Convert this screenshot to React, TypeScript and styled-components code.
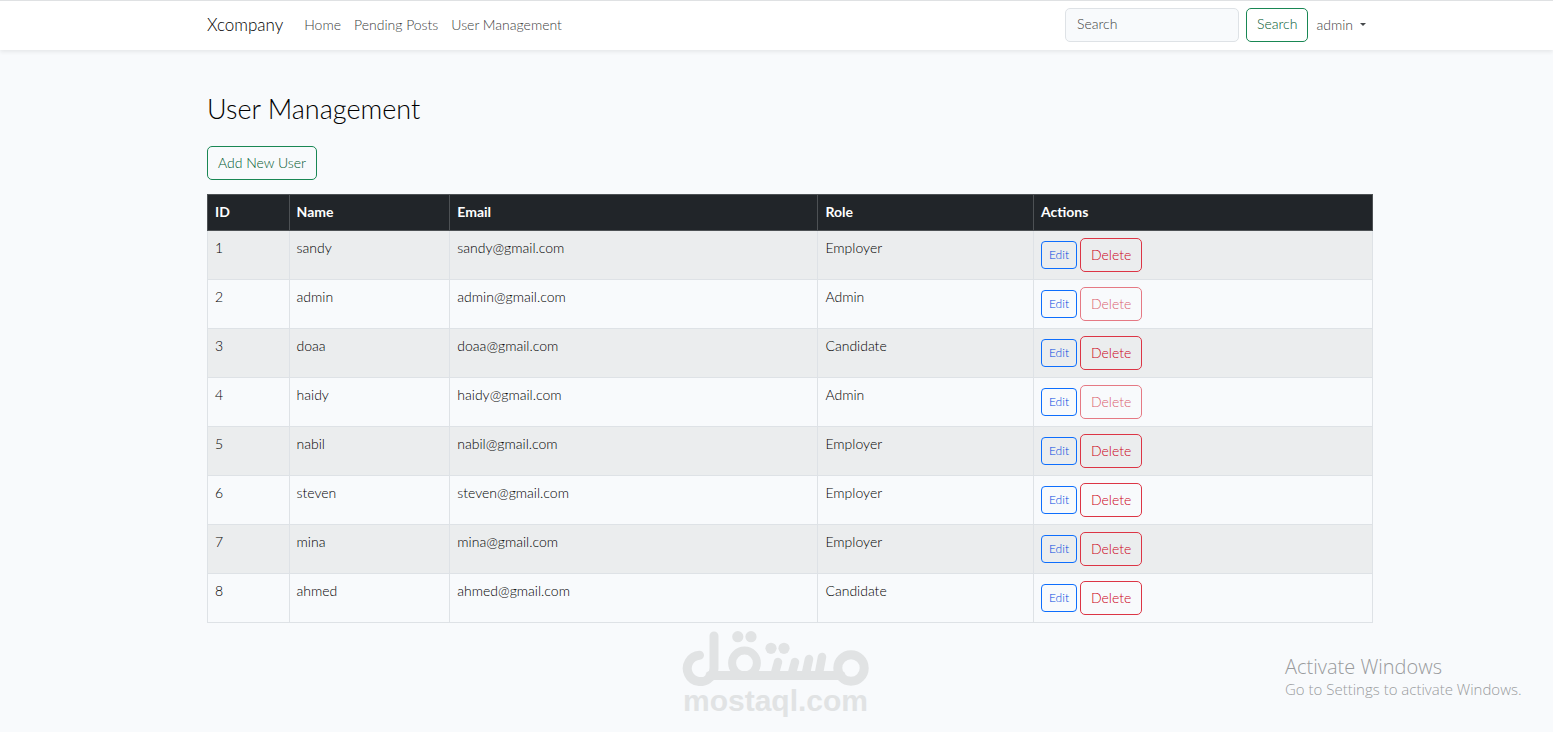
import React from "react";
import styled, { createGlobalStyle } from "styled-components";

const GlobalStyle = createGlobalStyle`
  *, *::before, *::after { box-sizing: border-box; }
  body {
    margin: 0;
    background: #f8fafc;
    color: #000;
    font-family: Lato, "Open Sans", sans-serif;
    font-size: 14px;
    font-weight: 300;
    line-height: 19px;
  }
  button, input { font: inherit; }
`;

const Page = styled.div`
  position: relative;
  min-height: 100vh;
  overflow: hidden;
`;

const Container = styled.div`
  max-width: 1193px;
  margin: 0 auto;
  padding-left: 27px;
`;

const Navbar = styled.header`
  background: #fff;
  border-top: 1px solid #dfe1e3;
  box-shadow: 0 2px 4px rgba(0, 0, 0, 0.075);
`;

const NavInner = styled(Container)`
  display: flex;
  align-items: center;
  justify-content: space-between;
  height: 49px;
  padding-bottom: 2px;
`;

const NavGroup = styled.nav`
  display: flex;
  align-items: center;
  gap: 13px;
`;

const Brand = styled.a`
  margin-right: 8px;
  color: #000;
  font-size: 17px;
  line-height: 24px;
  text-decoration: none;
`;

const NavLink = styled.a`
  color: #3c3e40;
  text-decoration: none;
`;

const SearchForm = styled.form`
  display: flex;
  align-items: center;
  gap: 7px;
`;

const SearchInput = styled.input`
  width: 174px;
  height: 34px;
  padding: 0 11px 2px;
  border: 1px solid #dee2e6;
  border-radius: 5px;
  background: #f8fafc;
  color: #212529;
  &::placeholder { color: #3c3e40; opacity: 1; }
`;

const tones = {
  success: { line: "#198754", text: "#00592f" },
  danger: { line: "#dc3545", text: "#cc0016" },
  primary: { line: "#0d6efd", text: "#0046e0" },
};

const Button = styled.button<{ $tone: keyof typeof tones; $small?: boolean }>`
  height: ${(p) => (p.$small ? 28 : 34)}px;
  padding: 0 ${(p) => (p.$small ? 7 : 10)}px 2px;
  border: 1px solid ${(p) => tones[p.$tone].line};
  border-radius: ${(p) => (p.$small ? 4 : 5)}px;
  background: transparent;
  color: ${(p) => tones[p.$tone].text};
  font-size: ${(p) => (p.$small ? 12 : 14)}px;
  &:disabled { opacity: 0.65; }
`;

const UserMenu = styled.button`
  display: flex;
  align-items: center;
  gap: 7px;
  margin-right: 7px;
  padding: 0;
  border: 0;
  background: none;
  color: #3c3e40;
  &::after {
    content: "";
    border: 3px solid transparent;
    border-top: 3px solid #45484b;
    border-bottom: 0;
  }
`;

const NavEnd = styled.div`
  display: flex;
  align-items: center;
  gap: 8px;
`;

const Main = styled.main`
  padding-top: 42px;
`;

const Title = styled.h1`
  margin: 0 0 20px;
  font-size: 27px;
  font-weight: 300;
  line-height: 34px;
`;

const Table = styled.table`
  width: 100%;
  margin-top: 14px;
  border-collapse: collapse;
  table-layout: fixed;
`;

const Th = styled.th<{ $share: number }>`
  width: ${(p) => p.$share}%;
  height: 36px;
  padding: 0 7px 2px;
  border: 1px solid #4d5154;
  background: #212529;
  color: #fff;
  font-weight: 700;
  text-align: left;
`;

const Row = styled.tr`
  &:nth-child(odd) { background: #ebedee; }
`;

const Td = styled.td`
  height: 49px;
  padding: 7px;
  border: 1px solid #dee2e6;
  vertical-align: top;
`;

const Actions = styled.div`
  display: flex;
  align-items: center;
  gap: 3px;
`;

const Mostaql = styled.div`
  position: absolute;
  bottom: 16px;
  left: 50%;
  width: 190px;
  margin-left: -96px;
  color: #e1e3e4;
  font: 700 30px/30px "Liberation Sans", sans-serif;
  text-align: center;
  pointer-events: none;
  svg { display: block; }
`;

const Activation = styled.div`
  position: absolute;
  right: 32px;
  bottom: 32px;
  width: 236px;
  color: #999b9c;
  font-family: "Open Sans", sans-serif;
  font-size: 15px;
  line-height: 22px;
  white-space: nowrap;
  pointer-events: none;
`;

const ActivationTitle = styled.div`
  font-size: 20px;
  line-height: 23px;
`;

const columns = [
  { label: "ID", share: 7 },
  { label: "Name", share: 13.8 },
  { label: "Email", share: 31.6 },
  { label: "Role", share: 18.5 },
  { label: "Actions", share: 29.1 },
];

const users = [
  ["sandy", "Employer"],
  ["admin", "Admin"],
  ["doaa", "Candidate"],
  ["haidy", "Admin"],
  ["nabil", "Employer"],
  ["steven", "Employer"],
  ["mina", "Employer"],
  ["ahmed", "Candidate"],
];

function MostaqlMark() {
  return (
    <svg width="190" height="58" viewBox="0 0 190 58" fill="none" stroke="currentColor" strokeWidth="9" strokeLinecap="round" aria-hidden="true">
      <path d="M18.500 27.200A13.200 13.200 0 1 0 29 49.500C32 47 33 44 33 40V8" />
      <path d="M29 47.500H160" />
      <circle cx="63.500" cy="35" r="12.400" strokeWidth="8" />
      <circle cx="170" cy="40" r="13.200" />
      <path d="M94 45l3-11M111 45l3-11M125 45l3-14M138 45l3-16" strokeWidth="8.500" />
      <g fill="currentColor" stroke="none">
        <circle cx="56.800" cy="8.700" r="5.600" />
        <circle cx="70" cy="8.700" r="5.600" />
        <circle cx="90" cy="20.300" r="5.600" />
        <circle cx="103" cy="20.300" r="5.600" />
      </g>
    </svg>
  );
}

export default function App() {
  return (
    <Page>
      <GlobalStyle />
      <Navbar>
        <NavInner>
          <NavGroup>
            <Brand href="#">Xcompany</Brand>
            <NavLink href="#">Home</NavLink>
            <NavLink href="#">Pending Posts</NavLink>
            <NavLink href="#">User Management</NavLink>
          </NavGroup>
          <NavEnd>
            <SearchForm onSubmit={(e) => e.preventDefault()}>
              <SearchInput type="search" placeholder="Search" aria-label="Search" />
              <Button $tone="success" type="submit">Search</Button>
            </SearchForm>
            <UserMenu type="button" aria-haspopup="menu">admin</UserMenu>
          </NavEnd>
        </NavInner>
      </Navbar>
      <Container>
        <Main>
          <Title>User Management</Title>
          <Button $tone="success" type="button">Add New User</Button>
          <Table>
            <thead>
              <tr>
                {columns.map((c) => (
                  <Th key={c.label} scope="col" $share={c.share}>{c.label}</Th>
                ))}
              </tr>
            </thead>
            <tbody>
              {users.map(([name, role], i) => (
                <Row key={name}>
                  <Td>{i + 1}</Td>
                  <Td>{name}</Td>
                  <Td>{name}@gmail.com</Td>
                  <Td>{role}</Td>
                  <Td>
                    <Actions>
                      <Button $tone="primary" $small type="button">Edit</Button>
                      <Button $tone="danger" type="button" disabled={role === "Admin"}>Delete</Button>
                    </Actions>
                  </Td>
                </Row>
              ))}
            </tbody>
          </Table>
        </Main>
      </Container>
      <Mostaql>
        <MostaqlMark />
        mostaql.com
      </Mostaql>
      <Activation>
        <ActivationTitle>Activate Windows</ActivationTitle>
        Go to Settings to activate Windows.
      </Activation>
    </Page>
  );
}
